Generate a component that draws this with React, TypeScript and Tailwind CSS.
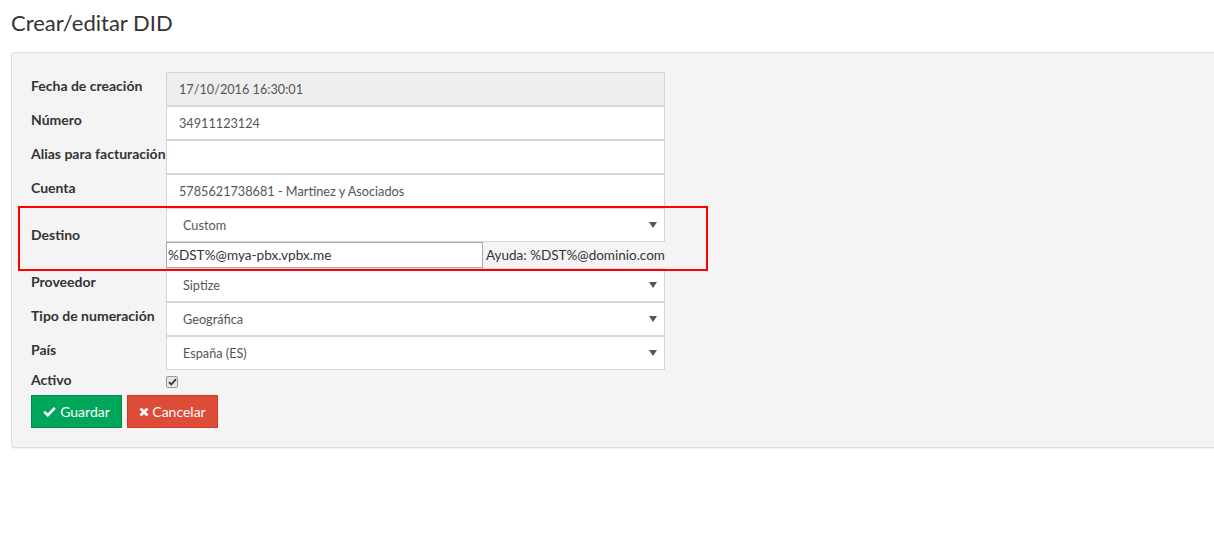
import React from 'react';

const font = { fontFamily: '"Source Sans Pro", Lato, "Liberation Sans", sans-serif' };

const Label: React.FC<{ children: React.ReactNode }> = ({ children }) => (
  <div className="pt-[5px] text-[14px] font-bold text-[#333] whitespace-nowrap leading-[18px]">{children}</div>
);

const TextBox: React.FC<{ value: string; disabled?: boolean }> = ({ value, disabled }) => (
  <div
    className={`h-[34px] border border-[#d2d6de] flex items-center pl-[12px] pt-[1px] text-[12.7px] text-[#555] ${
      disabled ? 'bg-[#eeeeee]' : 'bg-white'
    }`}
  >
    {value}
  </div>
);

const SelectBox: React.FC<{ value: string }> = ({ value }) => (
  <div className="h-[34px] border border-[#d2d6de] bg-white flex items-center pl-[16px] pr-[6px] text-[12.7px] text-[#555]">
    <span className="flex-1 pt-[1px]">{value}</span>
    <svg width="8" height="6" viewBox="0 0 8 6" className="mr-[1px]">
      <path d="M0 0h8L4 6z" fill="#555" />
    </svg>
  </div>
);

const App: React.FC = () => {
  return (
    <div className="w-screen min-h-screen overflow-hidden bg-white" style={font}>
      <h1 className="pl-[11px] pt-[8px] pb-[15px] text-[22px] leading-[29px] text-[#333]">Crear/editar DID</h1>

      <div className="ml-[11px] w-[1220px] rounded-[3px] border border-[#dddddd] bg-[#f4f4f4] shadow-[0_1px_1px_rgba(0,0,0,0.05)] px-[19px] pt-[19px] pb-[19px]">
        <div className="grid grid-cols-[135px_499px] items-start">
          <Label>Fecha de creación</Label>
          <TextBox value="17/10/2016 16:30:01" disabled />

          <Label>Número</Label>
          <TextBox value="34911123124" />

          <Label>Alias para facturación</Label>
          <TextBox value="" />

          <Label>Cuenta</Label>
          <TextBox value="5785621738681 - Martinez y Asociados" />

          <div className="relative col-span-2 grid grid-cols-[135px_499px] items-center">
            <div className="pb-[6px] text-[14px] font-bold text-[#333] leading-[18px]">Destino</div>
            <div>
              <SelectBox value="Custom" />
              <div className="flex items-center h-[26px]">
                <div className="shrink-0 w-[317px] h-[26px] border border-[#a9a9a9] bg-white flex items-center pl-[1px] text-[13.6px] text-[#333]">
                  %DST%@mya-pbx.vpbx.me
                </div>
                <span className="pl-[3px] text-[13.5px] text-[#333] whitespace-nowrap">Ayuda: %DST%@dominio.com</span>
              </div>
            </div>
            <div className="absolute left-[-13px] top-[-2px] w-[690px] h-[65px] border-2 border-[#ff0000] pointer-events-none" />
          </div>

          <Label>Proveedor</Label>
          <SelectBox value="Siptize" />

          <Label>Tipo de numeración</Label>
          <SelectBox value="Geográfica" />

          <Label>País</Label>
          <SelectBox value="España (ES)" />

          <div className="pt-[1px] text-[14px] font-bold text-[#333] leading-[18px]">Activo</div>
          <div className="pt-[6px]">
            <div className="w-[12px] h-[12px] rounded-[2px] border border-[#9a9a9a] bg-[#e6e6e6] flex items-center justify-center">
              <svg width="9" height="8" viewBox="0 0 9 8">
                <path d="M1 4.2l2.2 2.3L8 1.2" stroke="#333" strokeWidth="1.8" fill="none" />
              </svg>
            </div>
          </div>
        </div>

        <div className="flex gap-[5px] mt-[6px]">
          <button className="h-[33px] w-[91px] bg-[#00a65a] border border-[#008d4c] text-white text-[14px] flex items-center justify-center gap-[4px]">
            <svg width="13" height="11" viewBox="0 0 13 11">
              <path d="M1.2 5.6l3.6 3.6L11.8 1.8" stroke="#fff" strokeWidth="2.6" fill="none" />
            </svg>
            Guardar
          </button>
          <button className="h-[33px] w-[91px] bg-[#dd4b39] border border-[#d73925] text-white text-[14px] flex items-center justify-center gap-[3px]">
            <svg width="10" height="10" viewBox="0 0 10 10">
              <path d="M1.5 1.5l7 7M8.5 1.5l-7 7" stroke="#fff" strokeWidth="2.6" fill="none" />
            </svg>
            Cancelar
          </button>
        </div>
      </div>
    </div>
  );
};

export default App;
